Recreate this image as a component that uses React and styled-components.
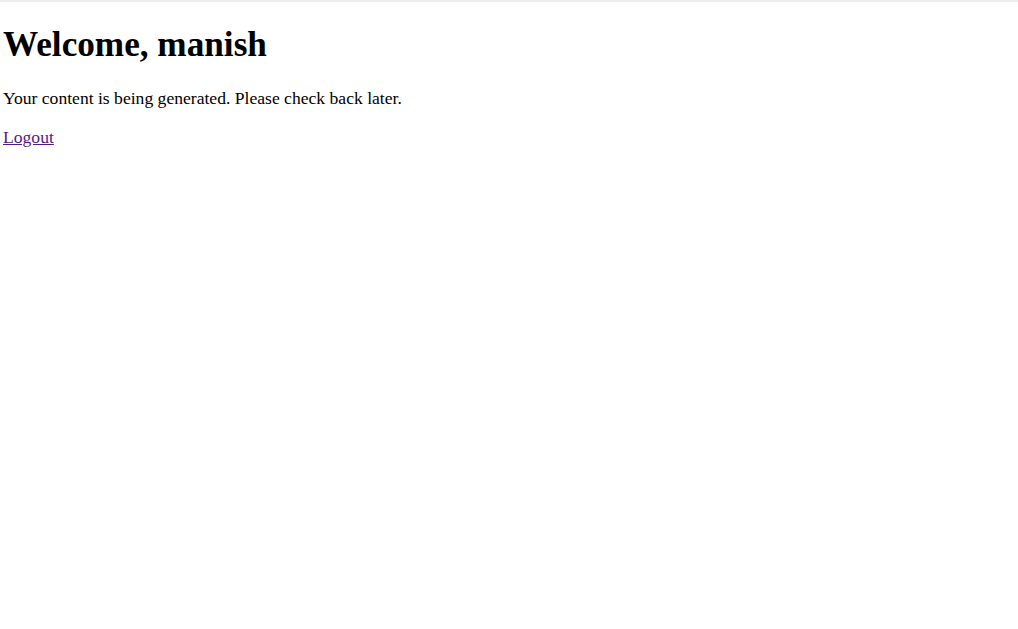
import React from "react";
import styled, { createGlobalStyle } from "styled-components";

const Global = createGlobalStyle`
  html, body { margin: 0; padding: 0; background: #fff; }
  body { font-family: "Liberation Serif", "Times New Roman", serif; color: #000; }
`;

const TopRule = styled.div`
  height: 2px;
  background: #ececec;
`;

const Content = styled.main`
  padding: 0 3px;
`;

const Title = styled.h1`
  font-size: 35.2px;
  font-weight: bold;
  margin: 22.8px 0 23.6px;
`;

const Message = styled.p`
  font-size: 17.6px;
  margin: 17.6px 0;
`;

const LinkRow = styled.p`
  font-size: 17.6px;
  margin: 0;
`;

const LogoutLink = styled.a`
  color: #551a8b;
  text-decoration: underline;
`;

export default function App() {
  return (
    <>
      <Global />
      <TopRule />
      <Content>
        <Title>Welcome, manish</Title>
        <Message>Your content is being generated. Please check back later.</Message>
        <LinkRow>
          <LogoutLink href="#">Logout</LogoutLink>
        </LinkRow>
      </Content>
    </>
  );
}
